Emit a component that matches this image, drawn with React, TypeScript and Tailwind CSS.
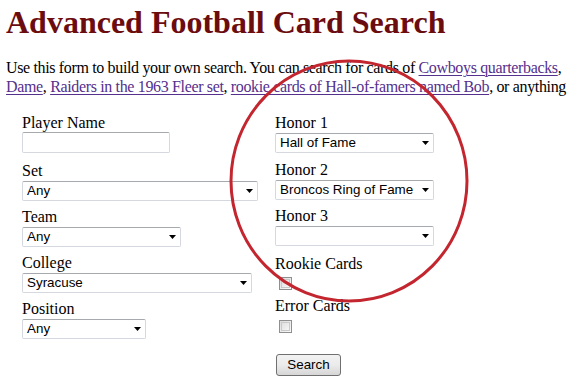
import React from "react";

const serif = { fontFamily: '"Liberation Serif", "Times New Roman", serif' };

function Arrow() {
  return (
    <svg width="7" height="4" viewBox="0 0 7 4" className="shrink-0">
      <path d="M0 0H7L3.5 4Z" fill="#000" />
    </svg>
  );
}

function Select({ value, w }: { value: string; w: string }) {
  return (
    <div
      className={`mt-px flex h-[20px] ${w} items-center justify-between rounded-[2px] border border-[#d5d9df] border-t-[#a6a9ae] bg-white pl-[4px] pr-[4px] font-['Liberation_Sans',Arial,sans-serif] text-[13.4px] leading-[16px] text-black`}
    >
      <span className="whitespace-nowrap">{value}</span>
      <Arrow />
    </div>
  );
}

function Label({ children }: { children: React.ReactNode }) {
  return <div className="h-[18px] text-[16px] leading-[18px] text-black">{children}</div>;
}

function Checkbox() {
  return (
    <div className="ml-[4px] flex h-[13px] w-[13px] items-center justify-center border border-[#8e8f8f] bg-gradient-to-br from-[#dcdcdc] to-[#fbfbfb]">
      <div className="h-[9px] w-[9px] border border-[#c9c9c9] bg-gradient-to-br from-[#e0e0e0] to-[#f6f6f6]" />
    </div>
  );
}

function Link({ children }: { children: React.ReactNode }) {
  return <span className="text-[#55308d] underline decoration-1 underline-offset-2">{children}</span>;
}

export default function App() {
  return (
    <div className="relative h-[386px] w-[569px] overflow-hidden bg-white" style={serif}>
      <h1 className="pl-[6px] pt-[4px] text-[32px] font-bold leading-[36px] text-[#6b0c0e]">
        Advanced Football Card Search
      </h1>
      <div className="mt-[18px] overflow-hidden pl-[6px] text-[16px] leading-[19px] tracking-[-0.35px] text-black">
        <div className="whitespace-nowrap">
          Use this form to build your own search. You can search for cards of <Link>Cowboys quarterbacks</Link>,
        </div>
        <div className="whitespace-nowrap">
          <Link>Dame</Link>, <Link>Raiders in the 1963 Fleer set</Link>,{" "}
          <Link>rookie cards of Hall-of-famers named Bob</Link>, or anything e
        </div>
      </div>

      <div className="mt-[18px] flex">
        <div className="ml-[22px] flex w-[253px] flex-col">
          <Label>Player Name</Label>
          <div className="h-[21px] w-[148px] rounded-[2px] border border-[#d5d9df] border-t-[#a6a9ae] bg-white" />
          <div className="mt-[9px]">
            <Label>Set</Label>
            <Select value="Any" w="w-[236px]" />
          </div>
          <div className="mt-[7px]">
            <Label>Team</Label>
            <Select value="Any" w="w-[159px]" />
          </div>
          <div className="mt-[7px]">
            <Label>College</Label>
            <Select value="Syracuse" w="w-[230px]" />
          </div>
          <div className="mt-[7px]">
            <Label>Position</Label>
            <Select value="Any" w="w-[124px]" />
          </div>
        </div>
        <div className="flex flex-col">
          <Label>Honor 1</Label>
          <Select value="Hall of Fame" w="w-[159px]" />
          <div className="mt-[8px]">
            <Label>Honor 2</Label>
            <Select value="Broncos Ring of Fame" w="w-[159px]" />
          </div>
          <div className="mt-[7px]">
            <Label>Honor 3</Label>
            <Select value="" w="w-[159px]" />
          </div>
          <div className="mt-[9px]">
            <Label>Rookie Cards</Label>
            <div className="mt-[4px]">
              <Checkbox />
            </div>
          </div>
          <div className="mt-[7px]">
            <Label>Error Cards</Label>
            <div className="mt-[5px]">
              <Checkbox />
            </div>
          </div>
          <div className="mt-[21px] pl-px">
            <button className="flex h-[22px] w-[65px] items-center justify-center rounded-[3px] border border-[#707070] bg-gradient-to-b from-[#f2f2f2] via-[#ebebeb] to-[#d6d6d6] font-['Liberation_Sans',Arial,sans-serif] text-[13.4px] text-black">
              Search
            </button>
          </div>
        </div>
      </div>

      <svg className="pointer-events-none absolute left-0 top-0" width="569" height="386" viewBox="0 0 569 386">
        <ellipse cx="349" cy="181" rx="118" ry="120" fill="none" stroke="#c3262e" strokeWidth="3" />
      </svg>
    </div>
  );
}
